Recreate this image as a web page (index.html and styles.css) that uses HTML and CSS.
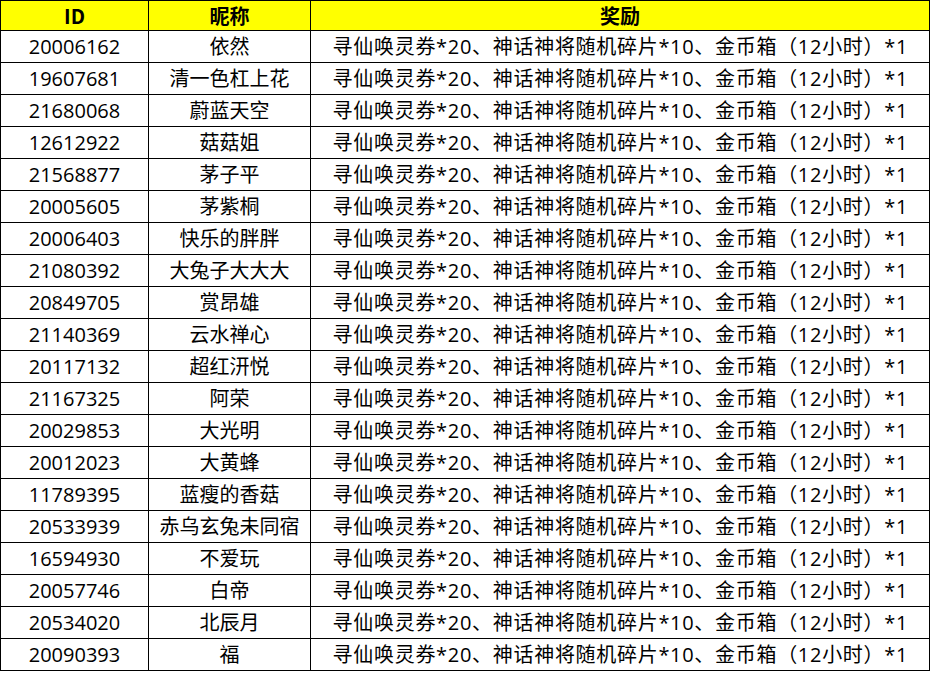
FILE: index.html
```html
<!DOCTYPE html>
<html lang="zh-CN">
<head>
<meta charset="utf-8">
<title>奖励名单</title>
<link rel="stylesheet" href="styles.css">
</head>
<body>
<table class="sheet">
  <colgroup>
    <col class="c-id">
    <col class="c-name">
    <col class="c-reward">
  </colgroup>
  <thead>
    <tr class="head"><th>ID</th><th>昵称</th><th>奖励</th></tr>
  </thead>
  <tbody>
    <tr><td>20006162</td><td>依然</td><td class="reward">寻仙唤灵券*20、神话神将随机碎片*10、金币箱（12小时）*1</td></tr>
    <tr><td>19607681</td><td>清一色杠上花</td><td class="reward">寻仙唤灵券*20、神话神将随机碎片*10、金币箱（12小时）*1</td></tr>
    <tr><td>21680068</td><td>蔚蓝天空</td><td class="reward">寻仙唤灵券*20、神话神将随机碎片*10、金币箱（12小时）*1</td></tr>
    <tr><td>12612922</td><td>菇菇姐</td><td class="reward">寻仙唤灵券*20、神话神将随机碎片*10、金币箱（12小时）*1</td></tr>
    <tr><td>21568877</td><td>茅子平</td><td class="reward">寻仙唤灵券*20、神话神将随机碎片*10、金币箱（12小时）*1</td></tr>
    <tr><td>20005605</td><td>茅紫桐</td><td class="reward">寻仙唤灵券*20、神话神将随机碎片*10、金币箱（12小时）*1</td></tr>
    <tr><td>20006403</td><td>快乐的胖胖</td><td class="reward">寻仙唤灵券*20、神话神将随机碎片*10、金币箱（12小时）*1</td></tr>
    <tr><td>21080392</td><td>大兔子大大大</td><td class="reward">寻仙唤灵券*20、神话神将随机碎片*10、金币箱（12小时）*1</td></tr>
    <tr><td>20849705</td><td>赏昂雄</td><td class="reward">寻仙唤灵券*20、神话神将随机碎片*10、金币箱（12小时）*1</td></tr>
    <tr><td>21140369</td><td>云水禅心</td><td class="reward">寻仙唤灵券*20、神话神将随机碎片*10、金币箱（12小时）*1</td></tr>
    <tr><td>20117132</td><td>超红汧悦</td><td class="reward">寻仙唤灵券*20、神话神将随机碎片*10、金币箱（12小时）*1</td></tr>
    <tr><td>21167325</td><td>阿荣</td><td class="reward">寻仙唤灵券*20、神话神将随机碎片*10、金币箱（12小时）*1</td></tr>
    <tr><td>20029853</td><td>大光明</td><td class="reward">寻仙唤灵券*20、神话神将随机碎片*10、金币箱（12小时）*1</td></tr>
    <tr><td>20012023</td><td>大黄蜂</td><td class="reward">寻仙唤灵券*20、神话神将随机碎片*10、金币箱（12小时）*1</td></tr>
    <tr><td>11789395</td><td>蓝瘦的香菇</td><td class="reward">寻仙唤灵券*20、神话神将随机碎片*10、金币箱（12小时）*1</td></tr>
    <tr><td>20533939</td><td>赤乌玄兔未同宿</td><td class="reward">寻仙唤灵券*20、神话神将随机碎片*10、金币箱（12小时）*1</td></tr>
    <tr><td>16594930</td><td>不爱玩</td><td class="reward">寻仙唤灵券*20、神话神将随机碎片*10、金币箱（12小时）*1</td></tr>
    <tr><td>20057746</td><td>白帝</td><td class="reward">寻仙唤灵券*20、神话神将随机碎片*10、金币箱（12小时）*1</td></tr>
    <tr><td>20534020</td><td>北辰月</td><td class="reward">寻仙唤灵券*20、神话神将随机碎片*10、金币箱（12小时）*1</td></tr>
    <tr><td>20090393</td><td>福</td><td class="reward">寻仙唤灵券*20、神话神将随机碎片*10、金币箱（12小时）*1</td></tr>
  </tbody>
</table>
</body>
</html>
```

FILE: styles.css
```css
html, body {
  margin: 0;
  padding: 0;
  background: #ffffff;
}

.sheet {
  border-collapse: collapse;
  table-layout: fixed;
  width: 929px;
  font-family: "Open Sans", "Noto Sans CJK SC", sans-serif;
  font-size: 20px;
  color: #000000;
}

.c-id { width: 148px; }
.c-name { width: 162px; }
.c-reward { width: 619px; }

.sheet th,
.sheet td {
  border: 1px solid #000000;
  padding: 0;
  text-align: center;
  vertical-align: middle;
  white-space: nowrap;
  line-height: 24px;
}

.sheet tbody tr {
  height: 32px;
}

.sheet td.reward {
  letter-spacing: 0.7px;
  text-indent: 0.7px;
}

.head {
  height: 30px;
  background: #ffff00;
}

.head th {
  font-weight: bold;
  font-family: "Noto Sans CJK SC", sans-serif;
  font-size: 20px;
}
```
